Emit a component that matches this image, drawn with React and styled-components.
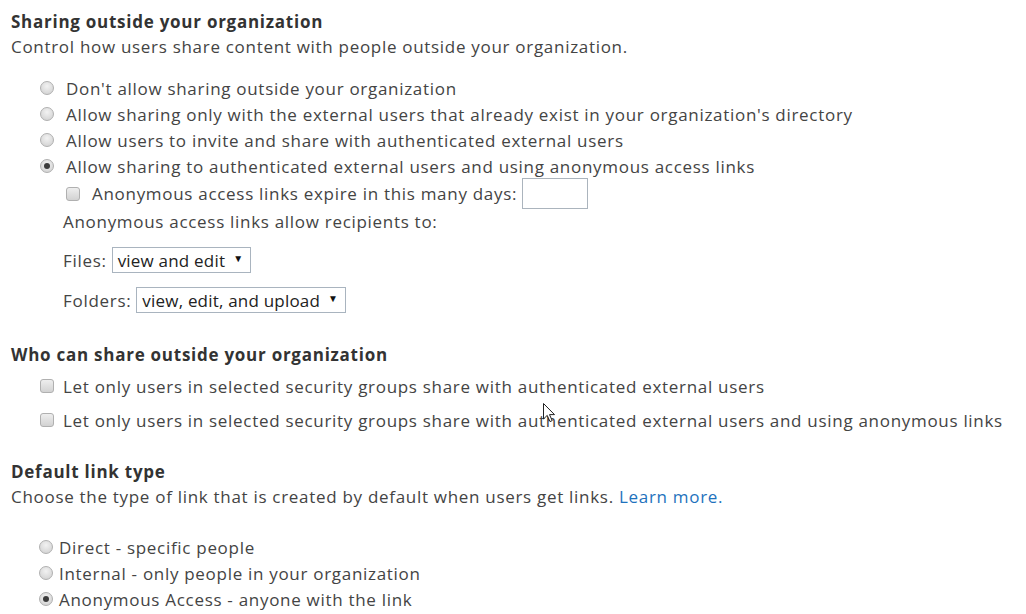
import styled, { createGlobalStyle } from 'styled-components';

const GlobalStyle = createGlobalStyle`
    body {
        margin: 0;
        background: #ffffff;
        font-family: 'Open Sans', 'Noto Sans', sans-serif;
        color: #444444;
    }
`;

const Page = styled.div`
    position: relative;
    width: 1026px;
    height: 614px;
    padding: 10px 0 0 11px;
    box-sizing: border-box;
    overflow: hidden;
    font-size: 17px;
    letter-spacing: 0.7px;
`;

const Section = styled.section`
    display: flex;
    flex-direction: column;
    margin-top: ${(p) => p.$top || 0}px;
`;

const Heading = styled.h2`
    margin: 0;
    font-size: 17px;
    font-weight: 700;
    line-height: 24px;
    letter-spacing: 0.74px;
    color: #333333;
`;

const Desc = styled.div`
    line-height: 25px;
`;

const Link = styled.a`
    color: #1e72bd;
    text-decoration: none;
`;

const List = styled.div`
    display: flex;
    flex-direction: column;
    padding-left: ${(p) => p.$indent}px;
    margin-top: ${(p) => p.$top || 0}px;
    gap: ${(p) => p.$gap || 0}px;
`;

const Option = styled.label`
    display: flex;
    align-items: center;
    height: ${(p) => p.$h || 26}px;
    gap: ${(p) => p.$gap || 11}px;
    white-space: nowrap;
`;

const RadioMark = styled.span`
    position: relative;
    width: 14px;
    height: 14px;
    flex: none;
    border-radius: 50%;
    border: 1px solid #b0b0b0;
    background: radial-gradient(circle at 50% 35%, #f2f2f2 0%, #dedede 55%, #cdcdcd 100%);
    box-sizing: border-box;

    &::after {
        content: '';
        display: ${(p) => (p.$checked ? 'block' : 'none')};
        position: absolute;
        left: 3px;
        top: 3px;
        width: 6px;
        height: 6px;
        border-radius: 50%;
        background: #3c3c3c;
    }
`;

const CheckMark = styled.span`
    width: 14px;
    height: 14px;
    flex: none;
    border-radius: 3px;
    border: 1px solid #b0b0b0;
    background: linear-gradient(#eeeeee, #d2d2d2);
    box-sizing: border-box;
`;

const Sub = styled.div`
    display: flex;
    flex-direction: column;
    padding-left: ${(p) => p.$indent}px;
`;

const DaysInput = styled.span`
    display: inline-block;
    width: 66px;
    height: 31px;
    margin-left: -7px;
    border: 1px solid #abb4bd;
    box-sizing: border-box;
    background: #fff;
`;

const Line = styled.div`
    line-height: 28px;
`;

const Field = styled.div`
    display: flex;
    align-items: center;
    gap: 5px;
    margin-top: ${(p) => p.$top}px;
`;

const Select = styled.span`
    display: inline-flex;
    align-items: center;
    height: 26px;
    padding: 0 7px 0 5px;
    gap: 8px;
    border: 1px solid #a9b4bf;
    box-sizing: border-box;
    color: #222222;
    background: #ffffff;
    letter-spacing: 0.2px;

    &::after {
        content: '▼';
        font-size: 10px;
        color: #111;
        margin-top: -5px;
    }
`;

const Cursor = styled.svg`
    position: absolute;
    left: 543px;
    top: 403px;
    pointer-events: none;
`;

const Radio = ({ checked, children, gap, h }) => (
    <Option $gap={gap} $h={h}>
        <RadioMark $checked={checked} />
        <span>{children}</span>
    </Option>
);

const Check = ({ children, gap, h }) => (
    <Option $gap={gap} $h={h}>
        <CheckMark />
        <span>{children}</span>
    </Option>
);

export default function App() {
    return (
        <>
            <GlobalStyle />
            <Page>
                <Section>
                    <Heading>Sharing outside your organization</Heading>
                    <Desc>Control how users share content with people outside your organization.</Desc>
                    <List $indent={29} $top={16}>
                        <Radio gap={12}>Don't allow sharing outside your organization</Radio>
                        <Radio gap={12}>Allow sharing only with the external users that already exist in your organization's directory</Radio>
                        <Radio gap={12}>Allow users to invite and share with authenticated external users</Radio>
                        <Radio gap={12} checked>Allow sharing to authenticated external users and using anonymous access links</Radio>
                        <Sub $indent={26}>
                            <Option $h={29} $gap={12}>
                                <CheckMark />
                                <span>Anonymous access links expire in this many days:</span>
                                <DaysInput />
                            </Option>
                        </Sub>
                        <Sub $indent={23}>
                            <Line>Anonymous access links allow recipients to:</Line>
                            <Field $top={11}>
                                Files: <Select>view and edit</Select>
                            </Field>
                            <Field $top={14}>
                                Folders: <Select>view, edit, and upload</Select>
                            </Field>
                        </Sub>
                    </List>
                </Section>

                <Section $top={30}>
                    <Heading>Who can share outside your organization</Heading>
                    <List $indent={29} $top={7} $gap={10}>
                        <Check h={24} gap={9}>Let only users in selected security groups share with authenticated external users</Check>
                        <Check h={24} gap={9}>Let only users in selected security groups share with authenticated external users and using anonymous links</Check>
                    </List>
                </Section>

                <Section $top={28}>
                    <Heading>Default link type</Heading>
                    <Desc>
                        Choose the type of link that is created by default when users get links.{' '}
                        <Link href="#">Learn more.</Link>
                    </Desc>
                    <List $indent={28} $top={25}>
                        <Radio gap={6}>Direct - specific people</Radio>
                        <Radio gap={6}>Internal - only people in your organization</Radio>
                        <Radio gap={6} checked>Anonymous Access - anyone with the link</Radio>
                    </List>
                </Section>

                <Cursor width="13" height="20" viewBox="0 0 13 20">
                    <path
                        d="M0.5 0.5 L0.5 16 L4.2 12.4 L7 18.6 L9.2 17.6 L6.5 11.6 L11.5 11.6 Z"
                        fill="#ffffff"
                        stroke="#222222"
                        strokeWidth="1"
                        strokeLinejoin="miter"
                    />
                </Cursor>
            </Page>
        </>
    );
}
